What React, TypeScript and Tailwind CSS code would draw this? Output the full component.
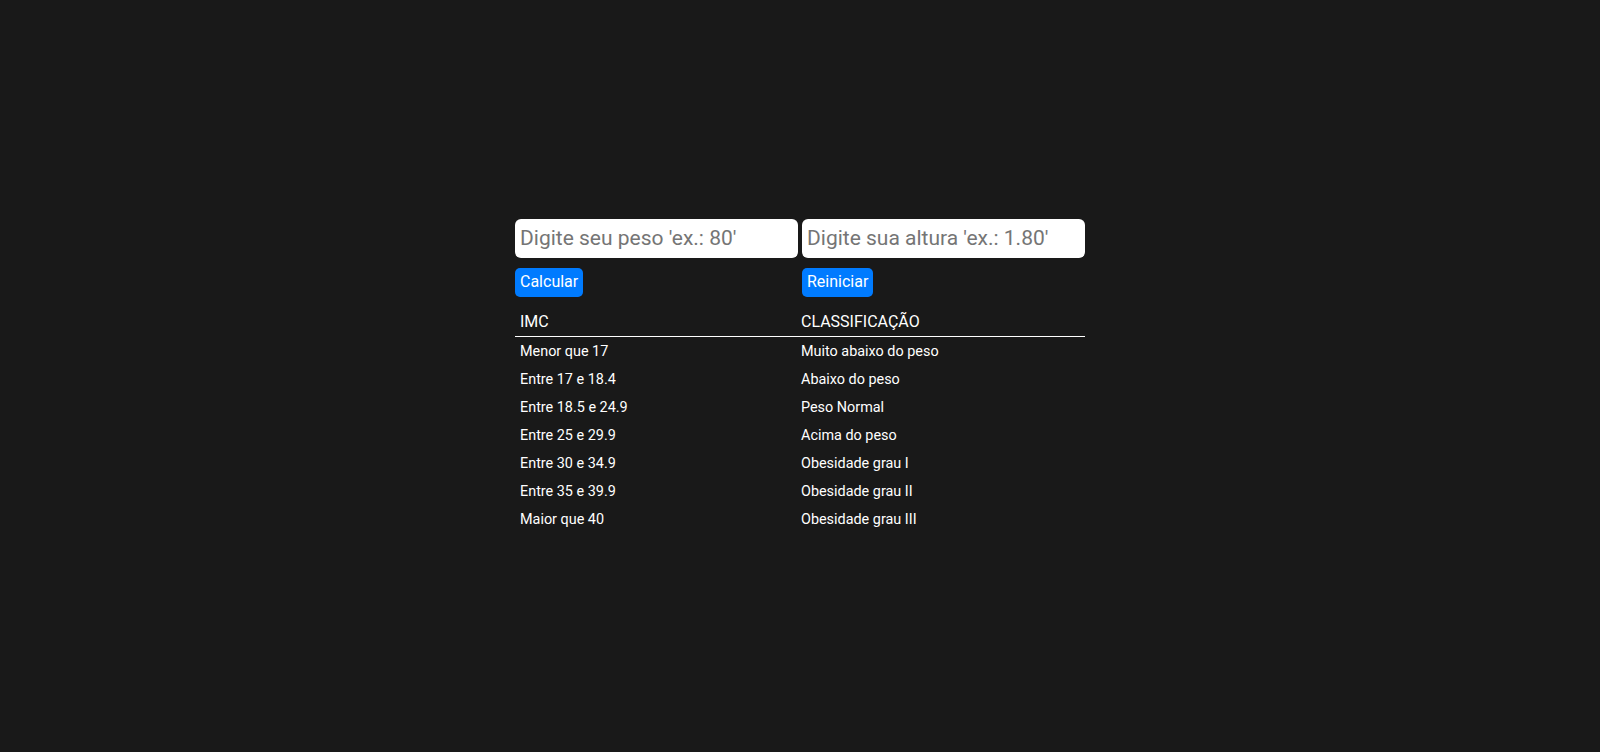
import { useState } from "react";

const faixas = [
  { imc: "Menor que 17", classificacao: "Muito abaixo do peso" },
  { imc: "Entre 17 e 18.4", classificacao: "Abaixo do peso" },
  { imc: "Entre 18.5 e 24.9", classificacao: "Peso Normal" },
  { imc: "Entre 25 e 29.9", classificacao: "Acima do peso" },
  { imc: "Entre 30 e 34.9", classificacao: "Obesidade grau I" },
  { imc: "Entre 35 e 39.9", classificacao: "Obesidade grau II" },
  { imc: "Maior que 40", classificacao: "Obesidade grau III" },
];

export default function App() {
  const [peso, setPeso] = useState("");
  const [altura, setAltura] = useState("");

  return (
    <main
      className="min-h-screen bg-[#191919] flex items-center justify-center text-white"
      style={{ fontFamily: "Roboto, 'Liberation Sans', sans-serif" }}
    >
      <div className="w-[570px]">
        {/* Inputs */}
        <div className="grid grid-cols-2 gap-[4px]">
          <input
            type="text"
            value={peso}
            onChange={(e) => setPeso(e.target.value)}
            placeholder="Digite seu peso 'ex.: 80'"
            className="h-[39px] w-full rounded-[6px] bg-white pl-[5px] text-[21px] text-black placeholder:text-[#757575] outline-none"
          />
          <input
            type="text"
            value={altura}
            onChange={(e) => setAltura(e.target.value)}
            placeholder="Digite sua altura 'ex.: 1.80'"
            className="h-[39px] w-full rounded-[6px] bg-white pl-[5px] text-[21px] text-black placeholder:text-[#757575] outline-none"
          />
        </div>

        {/* Buttons */}
        <div className="grid grid-cols-2 gap-[4px] mt-[10px]">
          <div>
            <button className="h-[29px] px-[5px] rounded-[5px] bg-[#007bff] text-[16px] text-white">
              Calcular
            </button>
          </div>
          <div>
            <button
              onClick={() => {
                setPeso("");
                setAltura("");
              }}
              className="h-[29px] px-[5px] rounded-[5px] bg-[#007bff] text-[16px] text-white"
            >
              Reiniciar
            </button>
          </div>
        </div>

        {/* Tabela */}
        <div className="mt-[10px]">
          <div className="grid grid-cols-[282px_288px] border-b border-white text-[16px] leading-[19px] pt-[5px] pb-[5px]">
            <div className="pl-[5px] pr-[4px]">IMC</div>
            <div className="px-[4px]">CLASSIFICAÇÃO</div>
          </div>
          <div className="pt-[1px]">
            {faixas.map((f, i) => (
              <div
                key={i}
                className="grid grid-cols-[282px_288px] h-[28px] items-center text-[14.4px] leading-[17px]"
              >
                <div className="pl-[5px] pr-[4px]">{f.imc}</div>
                <div className="px-[4px]">{f.classificacao}</div>
              </div>
            ))}
          </div>
        </div>
      </div>
    </main>
  );
}
